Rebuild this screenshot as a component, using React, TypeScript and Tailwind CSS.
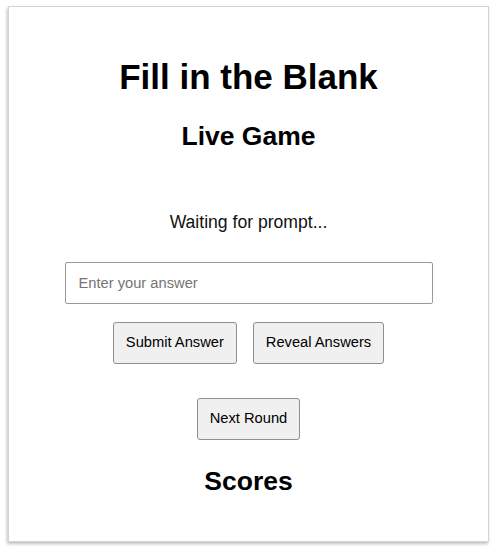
import React from "react";

export default function App() {
  return (
    <div className="w-[495px] h-[551px] bg-white pt-[6px] pl-[8px]" style={{ fontFamily: '"Liberation Sans", Arial, sans-serif' }}>
      <div className="w-[481px] h-[536px] bg-white border border-[#d4d4d4] shadow-[-1px_2px_3px_rgba(0,0,0,0.25)] flex flex-col items-center pt-[50px] text-black">
        <h1 className="text-[35px] leading-[40px] font-bold">Fill in the Blank</h1>
        <h2 className="mt-[24px] text-[26.5px] leading-[30px] font-bold">Live Game</h2>
        <p className="mt-[61px] text-[17.6px] leading-[20px] text-[#111]">Waiting for prompt...</p>
        <input
          type="text"
          placeholder="Enter your answer"
          className="mt-[30px] w-[368px] h-[42px] px-[13px] border border-[#9a9a9a] rounded-[2px] text-[14.7px] placeholder:text-[#757575] outline-none"
        />
        <div className="mt-[17.5px] flex gap-[16px]">
          <button className="h-[42px] px-[12px] bg-[#f0f0f0] border border-[#8f8f8f] rounded-[3px] text-[14.7px] text-black">Submit Answer</button>
          <button className="h-[42px] px-[12px] bg-[#f0f0f0] border border-[#8f8f8f] rounded-[3px] text-[14.7px] text-black">Reveal Answers</button>
        </div>
        <button className="mt-[34px] h-[42px] px-[12px] bg-[#f0f0f0] border border-[#8f8f8f] rounded-[3px] text-[14.7px] text-black">Next Round</button>
        <h2 className="mt-[26px] text-[26.5px] leading-[30px] font-bold">Scores</h2>
      </div>
    </div>
  );
}
